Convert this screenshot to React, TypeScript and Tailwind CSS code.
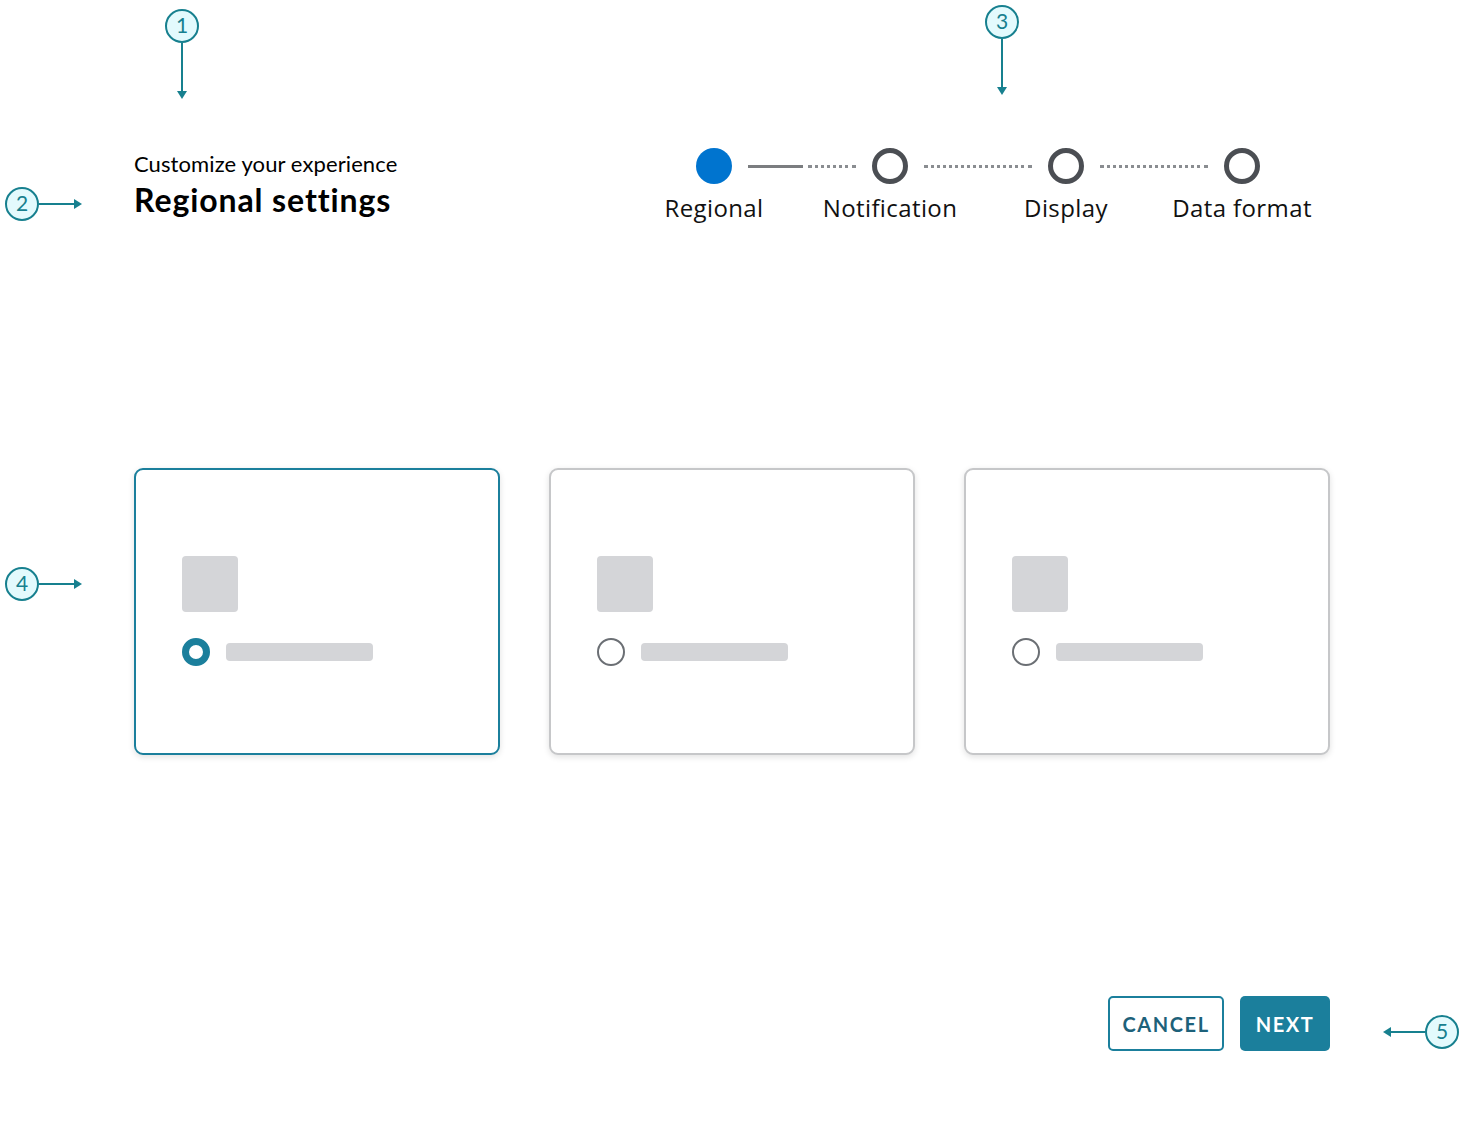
import React from 'react';

type Dir = 'down' | 'right' | 'left';

function Callout({ n, cx, cy, dir, len }: { n: number; cx: number; cy: number; dir: Dir; len: number }) {
  // circle r=17, arrow of given length starting from circle edge
  const r = 17;
  const pad = 10;
  let w = 0;
  let h = 0;
  let left = 0;
  let top = 0;
  let c = { x: 0, y: 0 };
  let line = { x1: 0, y1: 0, x2: 0, y2: 0 };
  let head = '';
  if (dir === 'down') {
    w = r * 2 + pad * 2;
    h = r * 2 + len + pad * 2;
    left = cx - r - pad;
    top = cy - r - pad;
    c = { x: r + pad, y: r + pad };
    const tip = c.y + r + len;
    line = { x1: c.x, y1: c.y + r, x2: c.x, y2: tip - 6 };
    head = `${c.x - 5},${tip - 8} ${c.x + 5},${tip - 8} ${c.x},${tip}`;
  } else if (dir === 'right') {
    w = r * 2 + len + pad * 2;
    h = r * 2 + pad * 2;
    left = cx - r - pad;
    top = cy - r - pad;
    c = { x: r + pad, y: r + pad };
    const tip = c.x + r + len;
    line = { x1: c.x + r, y1: c.y, x2: tip - 6, y2: c.y };
    head = `${tip - 8},${c.y - 5} ${tip - 8},${c.y + 5} ${tip},${c.y}`;
  } else {
    w = r * 2 + len + pad * 2;
    h = r * 2 + pad * 2;
    left = cx - r - len - pad;
    top = cy - r - pad;
    c = { x: len + r + pad, y: r + pad };
    const tip = pad;
    line = { x1: c.x - r, y1: c.y, x2: tip + 6, y2: c.y };
    head = `${tip + 8},${c.y - 5} ${tip + 8},${c.y + 5} ${tip},${c.y}`;
  }
  return (
    <svg className="absolute" style={{ left, top }} width={w} height={h} viewBox={`0 0 ${w} ${h}`}>
      <line {...line} stroke="#17808f" strokeWidth="2" />
      <polygon points={head} fill="#17808f" />
      <circle cx={c.x} cy={c.y} r={r - 1} fill="#e3fafd" stroke="#17808f" strokeWidth="2" />
      <text
        x={c.x}
        y={c.y + 7}
        textAnchor="middle"
        fontSize="21"
        fill="#17808f"
        fontFamily="Lato, 'Liberation Sans', sans-serif"
      >
        {n}
      </text>
    </svg>
  );
}

function StepDot({ active }: { active?: boolean }) {
  return active ? (
    <div className="h-9 w-9 shrink-0 rounded-full bg-[#0074cf]" />
  ) : (
    <div className="h-9 w-9 shrink-0 rounded-full border-[5px] border-[#4b4e53] bg-white" />
  );
}

function Dotted({ w }: { w: string }) {
  return <div className={`${w} border-t-[3px] border-dotted border-[#8a8d91]`} />;
}

function Stepper() {
  const labels = ['Regional', 'Notification', 'Display', 'Data format'];
  return (
    <div className="w-[704px]">
      <div className="flex items-center pl-[70px]">
        <StepDot active />
        <div className="mx-4 flex w-[108px] items-center">
          <div className="h-[3px] w-[55px] bg-[#7b7d80]" />
          <div className="ml-[5px] w-[48px] border-t-[3px] border-dotted border-[#8a8d91]" />
        </div>
        <StepDot />
        <div className="mx-4 w-[108px]">
          <Dotted w="w-full" />
        </div>
        <StepDot />
        <div className="mx-4 w-[108px]">
          <Dotted w="w-full" />
        </div>
        <StepDot />
      </div>
      <div className="mt-[9px] grid grid-cols-4 text-center font-['Open_Sans',sans-serif] text-[24px] leading-[30px] tracking-[0.4px] text-[#111]">
        {labels.map((l) => (
          <div key={l}>{l}</div>
        ))}
      </div>
    </div>
  );
}

function Card({ selected }: { selected?: boolean }) {
  return (
    <div
      className={`h-[287px] w-[366px] rounded-[9px] border-2 bg-white pl-[46px] pt-[86px] shadow-[0_2px_6px_rgba(0,0,0,0.12)] ${
        selected ? 'border-[#1b7f9c]' : 'border-[#c6c7c9]'
      }`}
    >
      <div className="h-14 w-14 rounded-[4px] bg-[#d4d5d8]" />
      <div className="mt-[26px] flex items-center">
        {selected ? (
          <div className="h-7 w-7 rounded-full border-[7px] border-[#1b7f9c] bg-white" />
        ) : (
          <div className="h-7 w-7 rounded-full border-2 border-[#6b6f74] bg-white" />
        )}
        <div className="ml-4 h-[18px] w-[147px] rounded-[4px] bg-[#d4d5d8]" />
      </div>
    </div>
  );
}

export default function App() {
  return (
    <div className="relative h-[1140px] w-[1460px] overflow-hidden bg-white font-['Lato',sans-serif]">
      <Callout n={1} cx={182} cy={26} dir="down" len={56} />
      <Callout n={2} cx={22} cy={204} dir="right" len={43} />
      <Callout n={3} cx={1002} cy={22} dir="down" len={56} />
      <Callout n={4} cx={22} cy={584} dir="right" len={43} />
      <Callout n={5} cx={1442} cy={1032} dir="left" len={42} />

      <div className="w-[1330px] pl-[134px] pt-[148px]">
        <div className="flex items-start justify-between">
          <div className="pt-[2px] text-black">
            <div className="text-[22px] leading-[27px] tracking-[0.1px]">Customize your experience</div>
            <div className="mt-[3px] text-[32px] font-bold leading-[40px] tracking-[0.9px]">Regional settings</div>
          </div>
          <Stepper />
        </div>

        <div className="mt-[245px] flex justify-between">
          <Card selected />
          <Card />
          <Card />
        </div>

        <div className="mt-[241px] flex justify-end gap-4">
          <button className="h-[55px] w-[116px] rounded-[5px] border-2 border-[#1b7f9c] bg-white text-[20px] font-bold tracking-[1.6px] text-[#1d617a]">
            CANCEL
          </button>
          <button className="h-[55px] w-[90px] rounded-[5px] bg-[#1b7f9c] text-[20px] font-bold tracking-[1.6px] text-white">
            NEXT
          </button>
        </div>
      </div>
    </div>
  );
}
